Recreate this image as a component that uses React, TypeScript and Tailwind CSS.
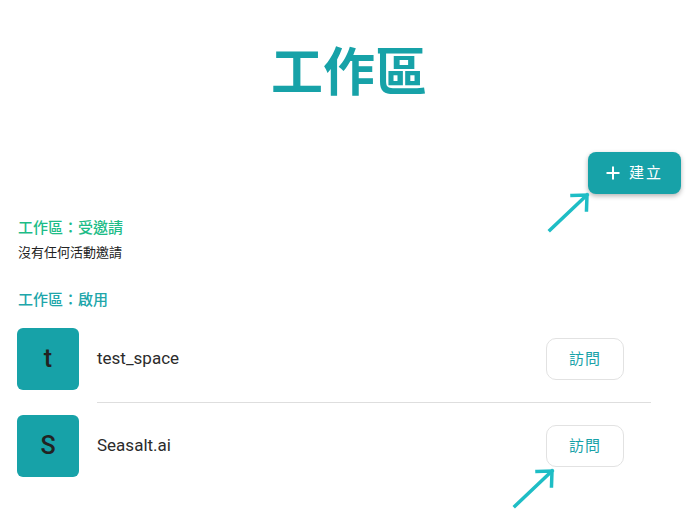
import React from "react";

const FONT = { fontFamily: "Roboto, 'Noto Sans CJK TC', sans-serif" };

function Arrow({ className }: { className: string }) {
  return (
    <svg className={className} width="50" height="48" viewBox="0 0 50 48" fill="none">
      <path d="M5 42 L42 7" stroke="#1ebdc5" strokeWidth="3.5" strokeLinecap="square" />
      <path d="M27 7.5 L42 7 L41.5 22" stroke="#1ebdc5" strokeWidth="3.5" strokeLinecap="square" strokeLinejoin="miter" />
    </svg>
  );
}

function Row({ letter, name }: { letter: string; name: string }) {
  return (
    <div className="flex items-center pl-[17px] pr-[41px]">
      <div className="w-[62px] h-[62px] rounded-[6px] bg-[#17a2a8] flex items-center justify-center text-[25px] text-[#222] font-medium">
        {letter}
      </div>
      <div className="ml-[18px] flex-1 text-[17px] text-[#2b2b2b]">{name}</div>
      <button className="mr-[27px] w-[78px] h-[42px] rounded-[10px] border border-[#e2e2e2] bg-white text-[15px] text-[#17a2a8] tracking-[1px]">
        訪問
      </button>
    </div>
  );
}

export default function App() {
  return (
    <div className="relative w-[692px] h-[518px] bg-white overflow-hidden" style={FONT}>
      <h1 className="mt-[46px] pl-[6px] text-center text-[52px] leading-[56px] font-bold text-[#17a2a8]">
        工作區
      </h1>
      <div className="mt-[50px] flex justify-end pr-[11px]">
        <button className="h-[42px] w-[93px] rounded-[8px] bg-[#17a2a8] text-white text-[15px] flex items-center justify-center gap-[9px] shadow-[0_2px_5px_rgba(0,0,0,0.3)]">
          <svg width="14" height="14" viewBox="0 0 14 14" fill="none">
            <path d="M7 0.5 V13.5 M0.5 7 H13.5" stroke="white" strokeWidth="2" />
          </svg>
          <span className="tracking-[2px]">建立</span>
        </button>
      </div>
      <div className="mt-[24px] pl-[18px] text-[15px] leading-[20px] font-medium text-[#1dbc87]">工作區：受邀請</div>
      <div className="mt-[6px] pl-[18px] text-[13px] leading-[18px] text-[#222]">沒有任何活動邀請</div>
      <div className="mt-[28px] pl-[18px] text-[15px] leading-[20px] font-medium text-[#20a6aa]">工作區：啟用</div>
      <div className="mt-[18px]">
        <Row letter="t" name="test_space" />
        <div className="ml-[97px] mr-[41px] my-[12px] h-px bg-[#dedede]" />
        <Row letter="S" name="Seasalt.ai" />
      </div>
      <Arrow className="absolute left-[545px] top-[188px]" />
      <Arrow className="absolute left-[510px] top-[464px]" />
    </div>
  );
}
